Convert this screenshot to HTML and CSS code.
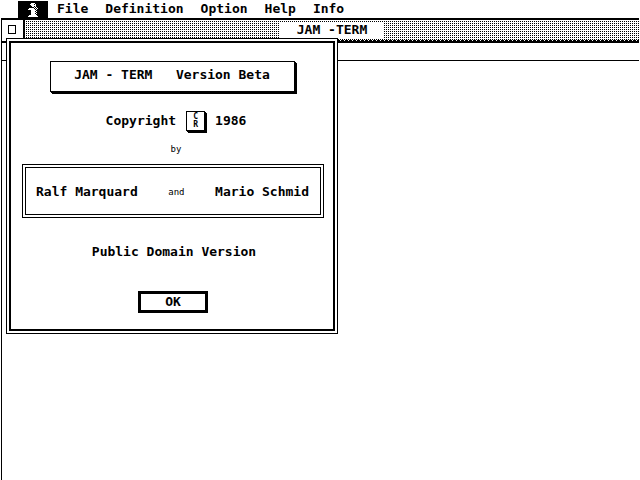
FILE: index.html
```
<!DOCTYPE html>
<html lang="en">

<head>
    <meta charset="UTF-8">
    <meta name="viewport" content="width=device-width, initial-scale=1.0">
    <title>JAM -TERM</title>
    <link rel="stylesheet" href="styles.css">
</head>

<body>
    <!-- menu bar -->
    <nav class="menubar">
        <button class="menu-info" aria-label="Desk">
            <svg class="info-icon" viewBox="0 0 10 14" width="10" height="14" shape-rendering="crispEdges">
                <path fill="#fff" d="M3 0h4v1h-4z M2 1h4v1h-4z M3 2h5v1h-5z M4 3h2v1h-2z M1 5h5v1h-5z M0 6h6v1h-6z M3 7h4v5h-4z M1 12h8v1h-8z M0 13h10v1h-10z
                M7 1h1v1h-1z M7 3h1v1h-1z M6 4h1v1h-1z M8 4h1v1h-1z M7 5h1v1h-1z M9 5h1v1h-1z M6 6h1v1h-1z M8 6h1v1h-1z M7 7h1v1h-1z M8 8h1v1h-1z M7 9h1v1h-1z M8 10h1v1h-1z M7 11h1v1h-1z" />
            </svg>
        </button>
        <div class="menus">
            <button>File</button>
            <button>Definition</button>
            <button>Option</button>
            <button>Help</button>
            <button>Info</button>
        </div>
    </nav>

    <!-- terminal window -->
    <main class="window">
        <header class="titlebar">
            <button class="closer" aria-label="Close"><span class="closer-box"></span></button>
            <div class="mover">
                <h1 class="title">JAM -TERM</h1>
            </div>
        </header>
        <div class="infoline"></div>
    </main>

    <!-- about box -->
    <section class="dialog" role="dialog" aria-label="About JAM - TERM">
        <h2 class="product">JAM - TERM&nbsp;&nbsp; Version Beta</h2>
        <p class="copyright">
            <span>Copyright</span>
            <span class="mark"><span>C</span><span>R</span></span>
            <span>1986</span>
        </p>
        <p class="by small">by</p>
        <div class="authors">
            <span>Ralf Marquard</span>
            <span class="small">and</span>
            <span>Mario Schmid</span>
        </div>
        <p class="domain">Public Domain Version</p>
        <button class="ok">OK</button>
    </section>
</body>

</html>
```
FILE: styles.css
```
* {
    box-sizing: border-box;
}

body {
    margin: 0;
    min-height: 100vh;
    display: flex;
    flex-direction: column;
    position: relative;
    background: #fff;
    color: #000;
    font: bold 13px/16px "DejaVu Sans Mono", monospace;
    white-space: nowrap;
}

h1, h2, p {
    margin: 0;
    font: inherit;
}

button {
    margin: 0;
    padding: 0;
    border: 0;
    background: none;
    color: inherit;
    font: inherit;
}

/* menu bar */
.menubar {
    display: flex;
    height: 18px;
    padding-left: 18px;
}

.menu-info {
    width: 30px;
    margin-top: 1px;
    background: #000;
}

.info-icon {
    display: block;
    margin: 0 auto;
}

.menus {
    display: flex;
    gap: 17px;
    padding-left: 9px;
}

/* window */
.window {
    flex: 1;
    margin: 0 1px;
    border-top: 2px solid #000;
    border-left: 1px solid #000;
}

.titlebar {
    display: flex;
    height: 23px;
    border-bottom: 2px solid #000;
}

.closer {
    display: flex;
    align-items: center;
    justify-content: center;
    width: 23px;
    padding: 0 2px 2px 0;
    border-right: 2px solid #000;
}

.closer-box {
    width: 8px;
    height: 9px;
    border: 1px solid #000;
}

/* dotted fill */
.mover {
    flex: 1;
    display: flex;
    justify-content: center;
    padding-top: 2px;
    background:
        repeating-linear-gradient(90deg, #000 0 3px, #fff 3px 4px) bottom / 100% 1px no-repeat,
        linear-gradient(90deg, #fff 1px, transparent 1px) 0 0 / 2px 2px,
        linear-gradient(#fff 1px, #000 1px) 0 0 / 2px 2px;
}

.title {
    height: 17px;
    padding: 0 17px;
    background: #fff;
}

.infoline {
    height: 18px;
    border-bottom: 1px solid #000;
}

/* dialog */
.dialog {
    position: absolute;
    top: 38px;
    left: 6px;
    width: 332px;
    display: flex;
    flex-direction: column;
    align-items: center;
    padding: 22px 13px 20px 15px;
    background: #fff;
    border: 1px solid #000;
    box-shadow: inset 0 0 0 2px #fff, inset 0 0 0 4px #000;
}

.product {
    width: 245px;
    margin-right: 2px;
    padding: 5px 0 8px;
    border: 1px solid #000;
    box-shadow: 1px 1px #000, 2px 2px #000;
    text-align: center;
}

.copyright {
    display: flex;
    align-items: center;
    gap: 10px;
    margin-top: 19px;
    padding-left: 6px;
}

.mark {
    display: flex;
    flex-direction: column;
    align-items: center;
    width: 19px;
    height: 20px;
    padding-top: 1px;
    border: 1px solid #000;
    box-shadow: 1px 1px #000, 2px 2px #000;
    font-size: 8px;
    line-height: 8px;
}

.small {
    font-size: 9px;
    font-weight: normal;
    line-height: 12px;
}

.by {
    margin-top: 12px;
    padding-left: 6px;
}

.authors {
    align-self: stretch;
    display: flex;
    align-items: center;
    justify-content: space-between;
    height: 54px;
    margin-top: 9px;
    padding: 2px 14px 0 13px;
    border: 1px solid #000;
    box-shadow: inset 0 0 0 2px #fff, inset 0 0 0 3px #000;
}

.domain {
    margin-top: 26px;
    padding-left: 2px;
}

.ok {
    width: 70px;
    height: 22px;
    margin-top: 31px;
    border: 3px solid #000;
}
```
